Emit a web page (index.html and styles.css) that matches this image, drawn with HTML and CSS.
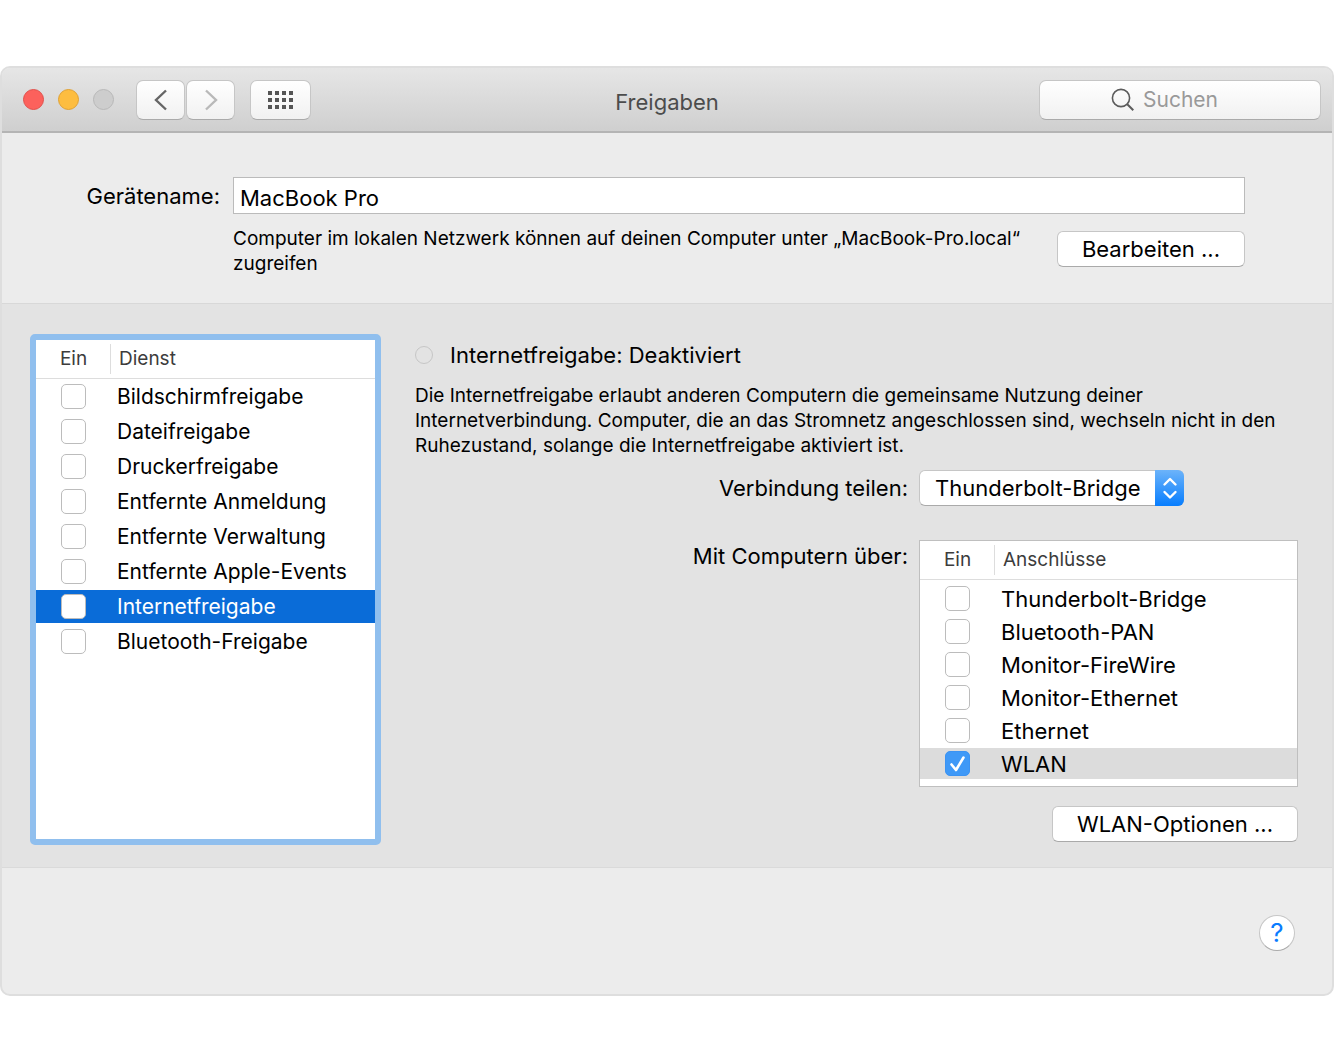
FILE: index.html
```html
<!DOCTYPE html>
<html lang="de">
<head>
  <meta charset="UTF-8" />
  <meta name="viewport" content="width=device-width, initial-scale=1.0"/>
  <title>Freigaben</title>
  <link rel="stylesheet" href="styles.css">
</head>
<body>
  <div class="window">
    <!-- Title bar -->
    <header class="titlebar">
      <div class="titlebar-left">
        <div class="lights">
          <button class="light light-close" aria-label="Schließen"></button>
          <button class="light light-min" aria-label="Minimieren"></button>
          <button class="light light-zoom" aria-label="Zoomen" disabled></button>
        </div>
        <div class="nav">
          <button class="tool" aria-label="Zurück">
            <svg width="16" height="22" viewBox="0 0 16 22"><path d="M13 1.500 3 11l10 9.500" fill="none" stroke="#666" stroke-width="2.400"/></svg>
          </button>
          <button class="tool" aria-label="Vorwärts" disabled>
            <svg width="16" height="22" viewBox="0 0 16 22"><path d="M3 1.500 13 11 3 20.500" fill="none" stroke="#b9b9b9" stroke-width="2.400"/></svg>
          </button>
        </div>
        <button class="tool tool-grid" aria-label="Alle einblenden">
          <svg width="26" height="20" viewBox="0 0 26 20" fill="#555">
            <path d="M0 1h4v4H0zM7 1h4v4H7zM14 1h4v4h-4zM21 1h4v4h-4zM0 8h4v4H0zM7 8h4v4H7zM14 8h4v4h-4zM21 8h4v4h-4zM0 15h4v4H0zM7 15h4v4H7zM14 15h4v4h-4zM21 15h4v4h-4z"/>
          </svg>
        </button>
      </div>
      <h1>Freigaben</h1>
      <label class="search">
        <svg width="24" height="24" viewBox="0 0 24 24" fill="none" stroke="#5c5c5c"><circle cx="10" cy="10" r="8.6" stroke-width="1.6"/><path d="m16 16 6.3 6.3" stroke-width="2"/></svg>
        <input type="search" placeholder="Suchen" aria-label="Suchen" />
      </label>
    </header>

    <!-- Device name -->
    <section class="device">
      <label for="deviceName">Gerätename:</label>
      <input type="text" id="deviceName" value="MacBook Pro" />
      <div class="device-info">
        <p>Computer im lokalen Netzwerk können auf deinen Computer unter „MacBook-Pro.local“ zugreifen</p>
        <button class="btn">Bearbeiten ...</button>
      </div>
    </section>

    <main class="content">
      <!-- List of services -->
      <div class="services">
        <table>
          <thead>
            <tr><th class="col-on">Ein</th><th>Dienst</th></tr>
          </thead>
          <tbody>
            <tr><td><input type="checkbox" id="s1" /></td><td><label for="s1">Bildschirmfreigabe</label></td></tr>
            <tr><td><input type="checkbox" id="s2" /></td><td><label for="s2">Dateifreigabe</label></td></tr>
            <tr><td><input type="checkbox" id="s3" /></td><td><label for="s3">Druckerfreigabe</label></td></tr>
            <tr><td><input type="checkbox" id="s4" /></td><td><label for="s4">Entfernte Anmeldung</label></td></tr>
            <tr><td><input type="checkbox" id="s5" /></td><td><label for="s5">Entfernte Verwaltung</label></td></tr>
            <tr><td><input type="checkbox" id="s6" /></td><td><label for="s6">Entfernte Apple-Events</label></td></tr>
            <tr class="selected"><td><input type="checkbox" id="s7" /></td><td><label for="s7">Internetfreigabe</label></td></tr>
            <tr><td><input type="checkbox" id="s8" /></td><td><label for="s8">Bluetooth-Freigabe</label></td></tr>
          </tbody>
        </table>
      </div>

      <!-- Details of the selected service -->
      <div class="details">
        <h2><span class="status"></span>Internetfreigabe: Deaktiviert</h2>
        <p>Die Internetfreigabe erlaubt anderen Computern die gemeinsame Nutzung deiner Internetverbindung. Computer, die an das Stromnetz angeschlossen sind, wechseln nicht in den Ruhezustand, solange die Internetfreigabe aktiviert ist.</p>

        <div class="share-form">
          <label for="source">Verbindung teilen:</label>
          <div class="select">
            <select id="source">
              <option>Thunderbolt-Bridge</option>
            </select>
            <span class="select-arrows">
              <svg width="16" height="24" viewBox="0 0 16 24" fill="none" stroke="#fff" stroke-width="2.4" stroke-linecap="round" stroke-linejoin="round"><path d="M2.5 8.5 8 3l5.5 5.5M2.5 16 8 21.5l5.5-5.5"/></svg>
            </span>
          </div>

          <span class="ports-label" id="portsLabel">Mit Computern über:</span>
          <div class="ports">
            <table aria-labelledby="portsLabel">
              <thead>
                <tr><th class="col-on">Ein</th><th>Anschlüsse</th></tr>
              </thead>
              <tbody>
                <tr><td><input type="checkbox" id="p1" /></td><td><label for="p1">Thunderbolt-Bridge</label></td></tr>
                <tr><td><input type="checkbox" id="p2" /></td><td><label for="p2">Bluetooth-PAN</label></td></tr>
                <tr><td><input type="checkbox" id="p3" /></td><td><label for="p3">Monitor-FireWire</label></td></tr>
                <tr><td><input type="checkbox" id="p4" /></td><td><label for="p4">Monitor-Ethernet</label></td></tr>
                <tr><td><input type="checkbox" id="p5" /></td><td><label for="p5">Ethernet</label></td></tr>
                <tr class="selected"><td><input type="checkbox" id="p6" checked /></td><td><label for="p6">WLAN</label></td></tr>
              </tbody>
            </table>
          </div>
        </div>

        <button class="btn btn-options">WLAN-Optionen ...</button>
      </div>
    </main>

    <footer class="footer">
      <button class="help" aria-label="Hilfe">?</button>
    </footer>
  </div>
</body>
</html>
```
FILE: styles.css
```css
* {
  box-sizing: border-box;
  margin: 0;
  padding: 0;
}
body {
  background: #ffffff;
  font-family: Inter, "Liberation Sans", sans-serif;
  font-size: 22px;
  line-height: 28px;
  color: #000000;
}
button,
input,
select {
  font: inherit;
  color: inherit;
}
svg {
  display: block;
}
.window {
  margin: 66px 0;
  border: 2px solid #dedede;
  border-radius: 10px;
  background: #ececec;
  overflow: hidden;
}

/* Title bar */
.titlebar {
  display: grid;
  grid-template-columns: 1fr auto 1fr;
  align-items: center;
  height: 65px;
  padding: 0 11px;
  background: linear-gradient(#e6e6e6, #cfcfcf);
  border-bottom: 2px solid #b4b4b4;
}
.titlebar h1 {
  font-size: 22px;
  font-weight: normal;
  color: #4c4c4c;
  padding-top: 4px;
}
.titlebar-left {
  display: flex;
  align-items: center;
}
.lights {
  display: flex;
  gap: 14px;
  margin: 0 22px 0 10px;
}
.light {
  width: 21px;
  height: 21px;
  border-radius: 50%;
  border: 1px solid #b8b8b8;
  background: #cdcdcd;
}
.light-close {
  background: #fc615c;
  border-color: #e1504b;
}
.light-min {
  background: #fdbd40;
  border-color: #e0a133;
}
.nav {
  display: flex;
  gap: 1px;
  margin-right: 15px;
}
.tool,
.search {
  height: 40px;
  border: 1px solid #c6c6c6;
  border-bottom-color: #aaaaaa;
  border-radius: 7px;
  background: linear-gradient(#ffffff, #f1f1f1);
}
.tool {
  display: flex;
  align-items: center;
  justify-content: center;
  width: 49px;
}
.tool-grid {
  width: 61px;
}
.search {
  justify-self: end;
  display: flex;
  align-items: center;
  gap: 8px;
  width: 282px;
  padding-left: 71px;
}
.search input {
  width: 160px;
  border: 0;
  outline: 0;
  background: none;
  appearance: none;
  font-size: 21px;
}
.search input::placeholder {
  color: #999999;
}

/* Device name */
.device {
  display: grid;
  grid-template-columns: 218px 1fr;
  column-gap: 13px;
  padding: 44px 87px 27px 0;
}
.device label {
  text-align: right;
  padding-top: 5px;
}
.device input {
  height: 37px;
  padding: 4px 6px 0;
  border: 1px solid #bbbbbb;
  background: #ffffff;
}
.device-info {
  grid-column: 2;
  display: flex;
  justify-content: space-between;
  gap: 20px;
  padding-top: 12px;
}
p {
  font-size: 19px;
  line-height: 25px;
}
.btn {
  flex: none;
  height: 36px;
  padding: 0 24px;
  border: 1px solid #c6c6c6;
  border-bottom-color: #aaaaaa;
  border-radius: 6px;
  background: #ffffff;
}
.device-info .btn {
  margin-top: 5px;
}

/* Services and details */
.content {
  display: flex;
  gap: 34px;
  padding: 30px 34px 22px 28px;
  background: #e3e3e3;
  border-top: 1px solid #d8d8d8;
  border-bottom: 1px solid #dadada;
}
.services {
  width: 351px;
  min-height: 511px;
  border: 6px solid #90bfee;
  border-radius: 5px;
  background: #ffffff;
}
table {
  width: 100%;
  border-spacing: 0;
  table-layout: fixed;
}
th {
  height: 39px;
  padding-left: 8px;
  border-bottom: 1px solid #dddddd;
  font-size: 19px;
  font-weight: normal;
  line-height: 30px;
  text-align: left;
  color: #3c3c3c;
}
.col-on {
  width: 75px;
  padding: 0;
  text-align: center;
  background: linear-gradient(#dddddd, #dddddd) right center / 1px 30px no-repeat;
}
td {
  height: 35px;
  padding-left: 6px;
  border-top: 1px solid #ffffff;
  border-bottom: 1px solid #ffffff;
}
td:first-child {
  padding: 0;
}
.services td {
  font-size: 21px;
}
.services .selected td {
  background: #0a6cd8;
  background-clip: padding-box;
  color: #ffffff;
}
input[type="checkbox"] {
  appearance: none;
  display: block;
  width: 25px;
  height: 25px;
  margin: 0 auto;
  border: 1px solid #bcbcbc;
  border-radius: 5px;
  background: #ffffff;
}
input[type="checkbox"]:checked {
  border-color: #3b93f3;
  background: #3f99f7 url("data:image/svg+xml,%3Csvg xmlns='http://www.w3.org/2000/svg' viewBox='0 0 23 23'%3E%3Cpath d='M5.5 12.5l4.500 5.500 7.500-12.500' fill='none' stroke='%23fff' stroke-width='2.6' stroke-linecap='round' stroke-linejoin='round'/%3E%3C/svg%3E") center / 23px no-repeat;
}

.details {
  flex: 1;
  display: flex;
  flex-direction: column;
}
.details h2 {
  display: flex;
  align-items: center;
  gap: 17px;
  padding-top: 7px;
  margin-bottom: 14px;
  font-size: 22px;
  font-weight: normal;
}
.status {
  width: 18px;
  height: 18px;
  border: 1px solid #c6c6c6;
  border-radius: 50%;
}
.share-form {
  display: grid;
  grid-template-columns: 1fr 379px;
  gap: 34px 11px;
  margin-top: 12px;
}
.share-form > label {
  padding-top: 4px;
  text-align: right;
}
.ports-label {
  padding-top: 2px;
  text-align: right;
}
.select {
  position: relative;
  width: 265px;
  height: 36px;
}
.select select {
  width: 100%;
  height: 100%;
  padding-left: 15px;
  border: 1px solid #c6c6c6;
  border-bottom-color: #aaaaaa;
  border-radius: 6px;
  background: #ffffff;
  appearance: none;
}
.select-arrows {
  position: absolute;
  top: 0;
  right: 0;
  display: flex;
  align-items: center;
  justify-content: center;
  width: 29px;
  height: 100%;
  border-radius: 0 6px 6px 0;
  background: linear-gradient(#6cb3fa, #077dfe);
  pointer-events: none;
}
.ports {
  padding-bottom: 6px;
  border: 1px solid #bfbfbf;
  background: #ffffff;
}
.ports tbody::before {
  content: "";
  display: block;
  height: 2px;
}
.ports td {
  height: 33px;
}
.ports .selected td {
  background: #dcdcdc;
  background-clip: padding-box;
}
.btn-options {
  align-self: flex-end;
  margin-top: 19px;
}

/* Footer */
.footer {
  display: flex;
  justify-content: flex-end;
  padding: 47px 37px 43px;
}
.help {
  width: 36px;
  height: 36px;
  border: 1px solid #c6c6c6;
  border-bottom-color: #aaaaaa;
  border-radius: 50%;
  background: #ffffff;
  color: #0a7cff;
  font-size: 26px;
}
```
